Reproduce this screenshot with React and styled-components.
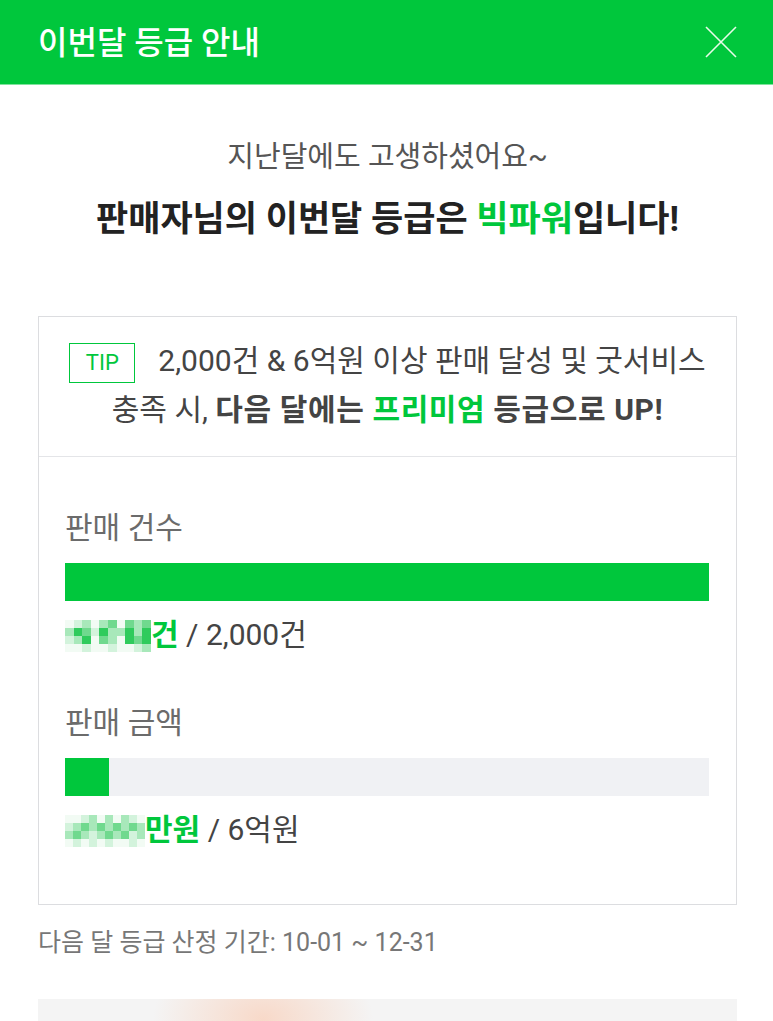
import React from "react";
import styled, { createGlobalStyle } from "styled-components";

const GlobalStyle = createGlobalStyle`
  *, *::before, *::after {
    box-sizing: border-box;
  }
  html, body {
    margin: 0;
    padding: 0;
    background: #fff;
  }
  body {
    font-family: Roboto, "Noto Sans CJK KR", sans-serif;
    color: #333;
  }
`;

const GREEN = "#00C73C";

// pixelated (masked) figures: one letter per cell
const SHADES = {
  ".": "#f2fbf4",
  a: "#d3f3dc",
  b: "#a8e8ba",
  c: "#70d98e",
  d: "#2fcb5c",
};

const countMosaic = [".ab.bc.cbc", "bdcadbbdbd", "abd.cb.dcd", "..a..a..ab"];
const amountMosaic = ["..ab.b.ba.", "abcbcbcbcb", "bcbabcbcab", ".a.a.a..a."];

const App = () => {
  const progress = [
    { label: "판매 건수", percent: 100, mosaic: countMosaic, width: 86, unit: "건", goal: "2,000건" },
    { label: "판매 금액", percent: 6.8, mosaic: amountMosaic, width: 80, unit: "만원", goal: "6억원" },
  ];

  return (
    <>
      <GlobalStyle />
      <Page>
        <Header>
          <HeaderTitle>이번달 등급 안내</HeaderTitle>
          <CloseButton aria-label="닫기">
            <svg width="32" height="32" viewBox="0 0 32 32">
              <path d="M1 1 L31 31 M31 1 L1 31" stroke="#e8fbe9" strokeWidth="1.6" fill="none" />
            </svg>
          </CloseButton>
        </Header>

        <Body>
          <Greeting>지난달에도 고생하셨어요~</Greeting>
          <Headline>
            판매자님의 이번달 등급은 <Green>빅파워</Green>입니다!
          </Headline>

          <Card>
            <TipSection>
              <TipLine>
                <TipBadge>TIP</TipBadge>
                <span>2,000건 &amp; 6억원 이상 판매 달성 및 굿서비스</span>
              </TipLine>
              <TipLine>
                <span>충족 시, </span>
                <Emph>다음 달에는 </Emph>
                <Emph $green>프리미엄</Emph>
                <Emph> 등급으로 UP!</Emph>
              </TipLine>
            </TipSection>

            <ProgressSection>
              {progress.map((item) => (
                <ProgressItem key={item.label}>
                  <ProgressLabel>{item.label}</ProgressLabel>
                  <Track>
                    <Fill style={{ width: `${item.percent}%` }} />
                  </Track>
                  <ProgressValue>
                    <Mosaic aria-hidden="true" $width={item.width}>
                      {item.mosaic.join("").split("").map((c, i) => (
                        <MosaicCell key={i} $shade={SHADES[c]} />
                      ))}
                    </Mosaic>
                    <ValueUnit>{item.unit}</ValueUnit>
                    <Goal> / {item.goal}</Goal>
                  </ProgressValue>
                </ProgressItem>
              ))}
            </ProgressSection>
          </Card>

          <PeriodNote>다음 달 등급 산정 기간: 10-01 ~ 12-31</PeriodNote>

          <Banner />
        </Body>
      </Page>
    </>
  );
};

export default App;

const Page = styled.div`
  width: 773px;
  height: 1021px;
  overflow: hidden;
  background: #fff;
`;

const Header = styled.header`
  height: 85px;
  background: ${GREEN};
  display: flex;
  align-items: center;
  justify-content: space-between;
  padding: 0 36px 0 38px;
  border-bottom: 1px solid #7fe39d;
`;

const HeaderTitle = styled.h1`
  margin: 0 0 4px;
  font-size: 32px;
  font-weight: 500;
  color: #fff;
`;

const CloseButton = styled.button`
  width: 32px;
  height: 32px;
  padding: 0;
  border: none;
  background: transparent;
  display: flex;
  align-items: center;
  justify-content: center;
  cursor: pointer;
`;

const Body = styled.main`
  padding: 52px 36px 0 38px;
`;

const Greeting = styled.p`
  margin: 0;
  text-align: center;
  font-size: 29px;
  line-height: 40px;
  color: #555;
`;

const Headline = styled.h2`
  margin: 20px 0 0;
  text-align: center;
  font-size: 35px;
  line-height: 46px;
  font-weight: 700;
  color: #222;
`;

const Green = styled.span`
  color: ${GREEN};
`;

const Emph = styled.strong`
  font-weight: 700;
  letter-spacing: 0.6px;
  white-space: pre;
  color: ${(p) => (p.$green ? GREEN : "inherit")};
`;

const Card = styled.section`
  margin-top: 73px;
  border: 1px solid #dcdde0;
`;

const TipSection = styled.div`
  padding: 19px 26px 22px;
  display: flex;
  flex-direction: column;
  font-size: 30px;
  line-height: 49px;
  color: #444;
  border-bottom: 1px solid #e4e5e8;
`;

const TipLine = styled.div`
  display: flex;
  align-items: center;
  justify-content: center;
  white-space: pre;
`;

const TipBadge = styled.span`
  display: inline-flex;
  align-items: center;
  justify-content: center;
  width: 66px;
  height: 40px;
  border: 1px solid ${GREEN};
  color: ${GREEN};
  font-size: 22px;
  line-height: 1;
  margin: 0 23px 0 0;
  position: relative;
  top: 2px;
`;

const ProgressSection = styled.div`
  padding: 51px 27px 54px 26px;
  display: flex;
  flex-direction: column;
  gap: 48px;
`;

const ProgressItem = styled.div`
  display: flex;
  flex-direction: column;
`;

const ProgressLabel = styled.div`
  font-size: 30px;
  line-height: 40px;
  color: #6b6b6b;
`;

const Track = styled.div`
  margin-top: 15px;
  height: 38px;
  background: #f0f1f4;
`;

const Fill = styled.div`
  height: 100%;
  background: ${GREEN};
`;

const ProgressValue = styled.div`
  margin-top: 14px;
  display: flex;
  align-items: center;
  font-size: 30px;
  line-height: 40px;
`;

const Mosaic = styled.span`
  display: grid;
  width: ${(p) => p.$width}px;
  grid-template-columns: repeat(10, 1fr);
  grid-auto-rows: 8px;
  margin-top: 2px;
`;

const MosaicCell = styled.span`
  background: ${(p) => p.$shade};
`;

const ValueUnit = styled.span`
  color: ${GREEN};
  font-weight: 700;
`;

const Goal = styled.span`
  color: #444;
  white-space: pre;
`;

const PeriodNote = styled.p`
  margin: 21px 0 0;
  font-size: 25px;
  line-height: 34px;
  color: #777;
`;

const Banner = styled.div`
  margin-top: 39px;
  height: 60px;
  background:
    radial-gradient(ellipse 110px 70px at 225px 20px, rgba(248, 214, 196, 0.9), rgba(248, 222, 208, 0) 100%),
    #f4f4f4;
`;
